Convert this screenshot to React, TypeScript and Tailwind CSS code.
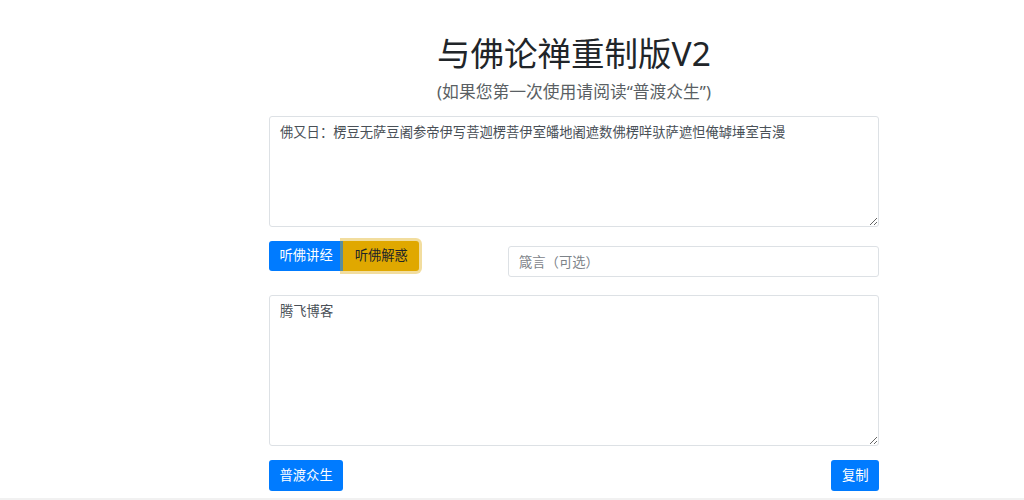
import React from "react";

export default function App() {
  const font = { fontFamily: '"Noto Sans", "Noto Sans CJK SC", sans-serif' };
  return (
    <div className="w-[1024px] h-[500px] bg-white overflow-hidden flex flex-col" style={font}>
      <div className="ml-[269px] w-[610px] flex flex-col flex-1">
        <h1 className="mt-[33px] text-center text-[33.5px] leading-[40px] font-normal text-[#212529]">
          与佛论禅重制版V2
        </h1>
        <p className="mt-[7px] text-center text-[16.8px] leading-[24px] text-[#5a5f64]">
          (如果您第一次使用请阅读“普渡众生”)
        </p>
        <textarea
          className="mt-[12px] h-[111px] w-full border border-[#dde1e5] rounded-[3px] px-[10px] py-[5px] text-[13.3px] leading-[20px] text-[#495057] outline-none"
          defaultValue="佛又日：楞豆无萨豆阇参帝伊写菩迦楞菩伊室皤地阇遮数佛楞咩驮萨遮怛俺罅埵室吉漫"
        />
        <div className="mt-[14px] flex items-start">
          <div className="flex w-[239px]">
            <button className="h-[30px] px-[10.5px] bg-[#007bff] text-white text-[13.3px] rounded-l-[3px]">
              听佛讲经
            </button>
            <button className="h-[30px] px-[11.5px] bg-[#e0a800] text-[#212529] text-[13.3px] rounded-r-[3px] shadow-[0_0_0_3px_rgba(222,170,12,0.4)]">
              听佛解惑
            </button>
          </div>
          <input
            className="mt-[5px] h-[31px] w-[371px] border border-[#dde1e5] rounded-[3px] px-[10px] text-[13.3px] text-[#495057] placeholder:text-[#7d8389] outline-none"
            placeholder="箴言（可选）"
          />
        </div>
        <textarea
          className="mt-[18px] h-[151px] w-full border border-[#dde1e5] rounded-[3px] px-[10px] py-[5px] text-[13.3px] leading-[20px] text-[#495057] outline-none"
          defaultValue="腾飞博客"
        />
        <div className="mt-[14px] flex justify-between">
          <button className="h-[31px] px-[10.5px] bg-[#007bff] text-white text-[13.3px] rounded-[3px]">
            普渡众生
          </button>
          <button className="h-[31px] px-[10.5px] bg-[#007bff] text-white text-[13.3px] rounded-[3px]">
            复制
          </button>
        </div>
      </div>
      <div className="h-[2px] bg-[#f1f1f1]" />
    </div>
  );
}
